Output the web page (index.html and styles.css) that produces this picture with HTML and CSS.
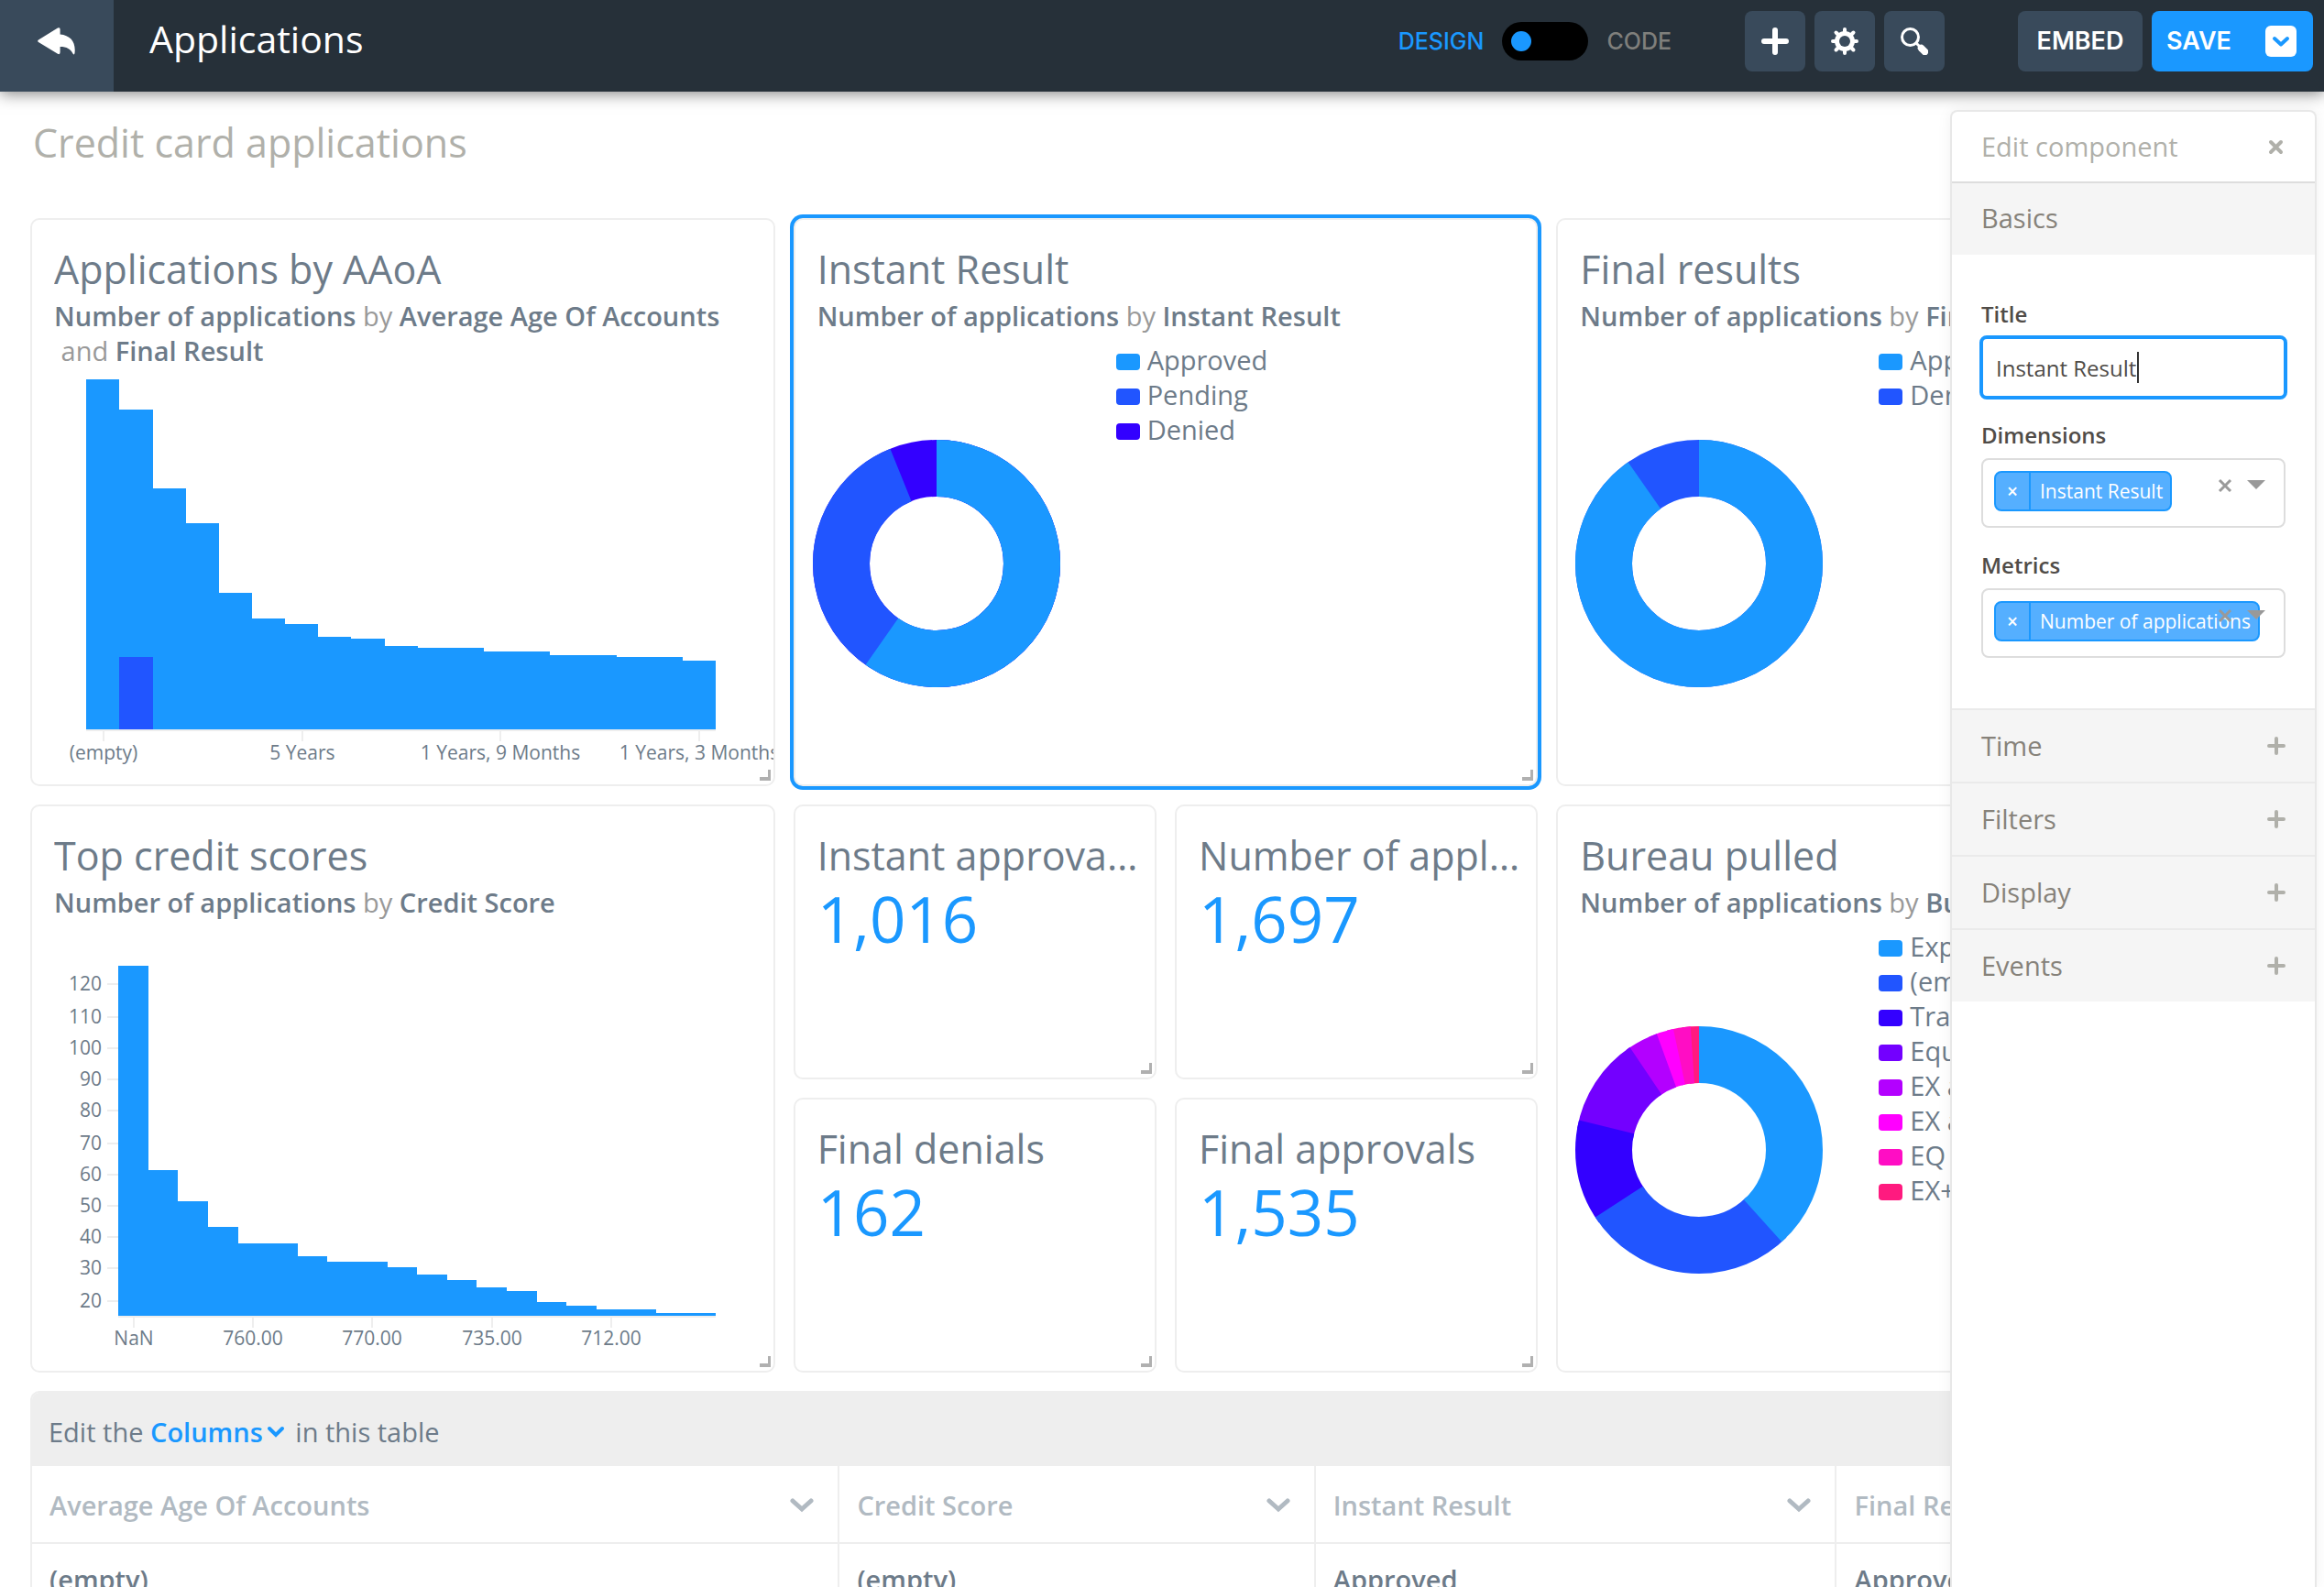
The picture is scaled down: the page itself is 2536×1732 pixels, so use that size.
FILE: index.html
```html
<!DOCTYPE html>
<html lang="en">
<head>
<meta charset="utf-8">
<title>Applications</title>
<link rel="stylesheet" href="styles.css">
</head>
<body>
<header class="topbar">
  <a class="back" href="#" aria-label="Back">
    <svg width="42" height="30" viewBox="0 0 42 30"><path fill="#fff" d="M1 13.5 22 .6Q24.600-.6 24.600 2V7.500C36 8.500 42 16 40.500 28Q40 30.500 38.500 28.500C36 23.500 32 21 24.600 21V27Q24.600 30 22 28.800L1 16Q-.6 14.700 1 13.500Z"/></svg>
  </a>
  <h1 class="app-title">Applications</h1>
  <label class="mode">
    <span class="mode-on">DESIGN</span>
    <input class="switch" type="checkbox" role="switch" aria-label="Code mode">
    <span class="mode-off">CODE</span>
  </label>
  <div class="tools">
    <button class="tool" type="button" aria-label="Add">
      <svg width="30" height="30" viewBox="0 0 30 30"><path d="M15 3V27M3 15H27" stroke="#fff" stroke-width="6" stroke-linecap="round"/></svg>
    </button>
    <button class="tool" type="button" aria-label="Settings">
      <svg width="30" height="30" viewBox="0 0 30 30"><g stroke="#fff" stroke-width="4" stroke-linecap="round"><path d="M15 2V28M2 15H28M5.500 5.500 24.500 24.500M24.500 5.500 5.500 24.500"/></g><circle cx="15" cy="15" r="11" fill="#fff"/><circle cx="15" cy="15" r="6" fill="#394a5b"/></svg>
    </button>
    <button class="tool" type="button" aria-label="Search">
      <svg width="30" height="30" viewBox="0 0 30 30"><circle cx="10.500" cy="10.500" r="9" fill="none" stroke="#fff" stroke-width="3"/><path d="M16.500 16.500 22 22" stroke="#fff" stroke-width="3"/><path d="M22.500 22.500 26.500 26.500" stroke="#fff" stroke-width="7.500" stroke-linecap="round"/></svg>
    </button>
  </div>
  <div class="actions">
    <button class="action" type="button">EMBED</button>
    <button class="action save" type="button">SAVE
      <svg width="34" height="34" viewBox="0 0 34 34"><rect width="34" height="34" rx="6" fill="#fff"/><path d="M10 14 17 20.500 24 14" fill="none" stroke="#1a98ff" stroke-width="4" stroke-linecap="round" stroke-linejoin="round"/></svg>
    </button>
  </div>
</header>

<main class="page">
  <h2 class="page-title">Credit card applications</h2>
  <div class="board">
    <section class="card large">
      <h3 class="card-title">Applications by AAoA</h3>
      <p class="query"><b>Number of applications</b> by <b>Average Age Of Accounts</b><br>&nbsp;and <b>Final Result</b></p>
      <svg class="bars" role="img" aria-label="Applications by average age of accounts">
        <path fill="#1a98ff" d="M59 395V13H95V46H132V132H168V170H204V246H240V274H276V280H312V294H348V296H385V304H421V306H493V310H565V314H638V316H710V320H746V395Z"/>
        <path fill="#2155ff" d="M95 316H132V395H95Z"/>
        <path class="axis" d="M59 396H746M78 396V408M295 396V408M511 396V408M728 396V408"/>
        <g class="tick middle"><text x="78" y="428">(empty)</text><text x="295" y="428">5 Years</text><text x="511" y="428">1 Years, 9 Months</text><text x="728" y="428">1 Years, 3 Months</text></g>
      </svg>
      <i class="grip"></i>
    </section>

    <section class="card large selected">
      <h3 class="card-title">Instant Result</h3>
      <p class="query"><b>Number of applications</b> by <b>Instant Result</b></p>
      <div class="donut-row">
        <svg class="donut" width="308" height="420" role="img" aria-label="Instant result share">
          <g class="ring" transform="rotate(-90 154 252)">
            <circle cx="154" cy="252" r="104" pathLength="360" stroke="#3300ff"/>
            <circle cx="154" cy="252" r="104" pathLength="360" stroke="#2155ff" stroke-dasharray="338 360"/>
            <circle cx="154" cy="252" r="104" pathLength="360" stroke="#1a98ff" stroke-dasharray="215 360"/>
          </g>
        </svg>
        <ul class="legend">
          <li><i class="c1"></i>Approved</li>
          <li><i class="c2"></i>Pending</li>
          <li><i class="c3"></i>Denied</li>
        </ul>
      </div>
      <i class="grip"></i>
    </section>

    <section class="card large">
      <h3 class="card-title">Final results</h3>
      <p class="query"><b>Number of applications</b> by <b>Final Result</b></p>
      <div class="donut-row">
        <svg class="donut" width="308" height="420" role="img" aria-label="Final results share">
          <g class="ring" transform="rotate(-90 154 252)">
            <circle cx="154" cy="252" r="104" pathLength="360" stroke="#2155ff"/>
            <circle cx="154" cy="252" r="104" pathLength="360" stroke="#1a98ff" stroke-dasharray="325 360"/>
          </g>
        </svg>
        <ul class="legend">
          <li><i class="c1"></i>Approved</li>
          <li><i class="c2"></i>Denied</li>
        </ul>
      </div>
      <i class="grip"></i>
    </section>

    <section class="card large">
      <h3 class="card-title">Top credit scores</h3>
      <p class="query"><b>Number of applications</b> by <b>Credit Score</b></p>
      <svg class="bars" role="img" aria-label="Applications by credit score">
        <path fill="#1a98ff" d="M94 433V51H127V274H159V308H192V336H225V354H290V368H322V374H388V380H420V388H453V394H485V402H518V406H551V418H583V422H616V426H681V430H746V433Z"/>
        <path class="axis" d="M94 434H746M111 434V446M241 434V446M371 434V446M502 434V446M632 434V446M82 71H94M82 107H94M82 141H94M82 175H94M82 209H94M82 245H94M82 279H94M82 313H94M82 347H94M82 381H94M82 417H94"/>
        <g class="tick end"><text x="76" y="78">120</text><text x="76" y="114">110</text><text x="76" y="148">100</text><text x="76" y="182">90</text><text x="76" y="216">80</text><text x="76" y="252">70</text><text x="76" y="286">60</text><text x="76" y="320">50</text><text x="76" y="354">40</text><text x="76" y="388">30</text><text x="76" y="424">20</text></g>
        <g class="tick middle"><text x="111" y="465">NaN</text><text x="241" y="465">760.00</text><text x="371" y="465">770.00</text><text x="502" y="465">735.00</text><text x="632" y="465">712.00</text></g>
      </svg>
      <i class="grip"></i>
    </section>

    <section class="card">
      <h3 class="card-title">Instant approvals count</h3>
      <p class="kpi">1,016</p>
      <i class="grip"></i>
    </section>
    <section class="card">
      <h3 class="card-title">Number of applications</h3>
      <p class="kpi">1,697</p>
      <i class="grip"></i>
    </section>

    <section class="card large">
      <h3 class="card-title">Bureau pulled</h3>
      <p class="query"><b>Number of applications</b> by <b>Bureau Pulled</b></p>
      <div class="donut-row">
        <svg class="donut" width="308" height="420" role="img" aria-label="Bureau pulled share">
          <g class="ring" transform="rotate(-90 154 252)">
            <circle cx="154" cy="252" r="104" pathLength="360" stroke="#ff1a7f" stroke-dasharray="8 352" stroke-dashoffset="-352"/>
            <circle cx="154" cy="252" r="104" pathLength="360" stroke="#ff0dc4" stroke-dasharray="11 349" stroke-dashoffset="-345"/>
            <circle cx="154" cy="252" r="104" pathLength="360" stroke="#ff00ff" stroke-dasharray="12 348" stroke-dashoffset="-336"/>
            <circle cx="154" cy="252" r="104" pathLength="360" stroke="#b300ff" stroke-dasharray="16 344" stroke-dashoffset="-324"/>
            <circle cx="154" cy="252" r="104" pathLength="360" stroke="#7300ff" stroke-dasharray="46 314" stroke-dashoffset="-280"/>
            <circle cx="154" cy="252" r="104" pathLength="360" stroke="#3300ff" stroke-dasharray="50 310" stroke-dashoffset="-234"/>
            <circle cx="154" cy="252" r="104" pathLength="360" stroke="#2155ff" stroke-dasharray="102 258" stroke-dashoffset="-135"/>
            <circle cx="154" cy="252" r="104" pathLength="360" stroke="#1a98ff" stroke-dasharray="138 222"/>
          </g>
        </svg>
        <ul class="legend">
          <li><i class="c1"></i>Experian</li>
          <li><i class="c2"></i>(empty)</li>
          <li><i class="c3"></i>TransUnion</li>
          <li><i class="c4"></i>Equifax</li>
          <li><i class="c5"></i>EX and TU</li>
          <li><i class="c6"></i>EX and EQ</li>
          <li><i class="c7"></i>EQ and TU</li>
          <li><i class="c8"></i>EX+EQ+TU</li>
        </ul>
      </div>
      <i class="grip"></i>
    </section>

    <section class="card">
      <h3 class="card-title">Final denials</h3>
      <p class="kpi">162</p>
      <i class="grip"></i>
    </section>
    <section class="card">
      <h3 class="card-title">Final approvals</h3>
      <p class="kpi">1,535</p>
      <i class="grip"></i>
    </section>

    <section class="table-card">
      <div class="table-bar">Edit the&nbsp;<button class="columns" type="button">Columns<svg width="20" height="14" viewBox="0 0 20 14"><path d="M3 3 10 10 17 3" fill="none" stroke="#1a98ff" stroke-width="4" stroke-linecap="round"/></svg></button>&nbsp;in this table</div>
      <table class="data">
        <thead>
          <tr>
            <th class="w-age"><span class="head">Average Age Of Accounts<svg width="26" height="18" viewBox="0 0 26 18"><path d="M3 4 13 13 23 4"/></svg></span></th>
            <th class="w-score"><span class="head">Credit Score<svg width="26" height="18" viewBox="0 0 26 18"><path d="M3 4 13 13 23 4"/></svg></span></th>
            <th class="w-instant"><span class="head">Instant Result<svg width="26" height="18" viewBox="0 0 26 18"><path d="M3 4 13 13 23 4"/></svg></span></th>
            <th><span class="head">Final Result<svg width="26" height="18" viewBox="0 0 26 18"><path d="M3 4 13 13 23 4"/></svg></span></th>
          </tr>
        </thead>
        <tbody>
          <tr><td>(empty)</td><td>(empty)</td><td>Approved</td><td>Approved</td></tr>
        </tbody>
      </table>
    </section>
  </div>
</main>

<aside class="panel">
  <div class="panel-head">
    <h2 class="panel-title">Edit component</h2>
    <button class="icon-button" type="button" aria-label="Close"><svg width="20" height="20" viewBox="0 0 20 20"><path d="M4 5 15 16M15 5 4 16" stroke="#b0b0aa" stroke-width="4" stroke-linecap="round"/></svg></button>
  </div>
  <h3 class="section first">Basics</h3>
  <form class="fields">
    <label class="label" for="title">Title</label>
    <div class="text-wrap"><input class="text" id="title" type="text" value="Instant Result"><i class="caret"></i></div>
    <span class="label" id="dimensions">Dimensions</span>
    <div class="multi" role="group" aria-labelledby="dimensions">
      <span class="chip"><button class="remove" type="button" aria-label="Remove">×</button><span class="chip-text">Instant Result</span></span>
      <span class="controls">
        <button class="icon-button" type="button" aria-label="Clear"><svg width="16" height="16" viewBox="0 0 16 16"><path d="M2 2 14 14M14 2 2 14" stroke="#999" stroke-width="3"/></svg></button>
        <button class="icon-button" type="button" aria-label="Open"><svg width="20" height="16" viewBox="0 0 20 16"><path d="M0 2H20L10 12Z" fill="#999"/></svg></button>
      </span>
    </div>
    <span class="label" id="metrics">Metrics</span>
    <div class="multi" role="group" aria-labelledby="metrics">
      <span class="chip"><button class="remove" type="button" aria-label="Remove">×</button><span class="chip-text">Number of applications</span></span>
      <span class="controls">
        <button class="icon-button" type="button" aria-label="Clear"><svg width="16" height="16" viewBox="0 0 16 16"><path d="M2 2 14 14M14 2 2 14" stroke="#999" stroke-width="3"/></svg></button>
        <button class="icon-button" type="button" aria-label="Open"><svg width="20" height="16" viewBox="0 0 20 16"><path d="M0 2H20L10 12Z" fill="#999"/></svg></button>
      </span>
    </div>
  </form>
  <button class="section" type="button">Time<svg width="20" height="20" viewBox="0 0 20 20"><path d="M10 2V18M2 10H18"/></svg></button>
  <button class="section" type="button">Filters<svg width="20" height="20" viewBox="0 0 20 20"><path d="M10 2V18M2 10H18"/></svg></button>
  <button class="section" type="button">Display<svg width="20" height="20" viewBox="0 0 20 20"><path d="M10 2V18M2 10H18"/></svg></button>
  <button class="section" type="button">Events<svg width="20" height="20" viewBox="0 0 20 20"><path d="M10 2V18M2 10H18"/></svg></button>
</aside>
</body>
</html>
```
FILE: styles.css
```css
* {
  box-sizing: border-box;
}

html {
  height: 100%;
}

body {
  position: relative;
  height: 100%;
  margin: 0;
  overflow: hidden;
  background: #fff;
  color: #6d7b89;
  font: 29px/38px "Open Sans", "Noto Sans", sans-serif;
}

h1, h2, h3, p, ul {
  margin: 0;
  padding: 0;
  font-weight: 400;
}

button {
  padding: 0;
  border: 0;
  background: none;
  color: inherit;
  font: inherit;
  cursor: pointer;
}

b {
  font-weight: 600;
}

svg {
  flex: none;
}

/* Top bar */
.topbar {
  position: relative;
  display: flex;
  align-items: center;
  height: 100px;
  padding: 0 12px 10px 0;
  background: #263039;
  box-shadow: 0 2px 16px rgba(0, 0, 0, 0.5);
}

.back {
  display: flex;
  align-items: center;
  justify-content: center;
  align-self: flex-start;
  width: 124px;
  height: 100px;
  padding-bottom: 10px;
  background: #394a5b;
}

.app-title {
  flex: 1;
  padding: 0 0 6px 39px;
  color: #fff;
  font-size: 41px;
  line-height: 56px;
}

.mode {
  display: flex;
  align-items: center;
  gap: 20px;
  font: 500 25px/30px Inter, sans-serif;
}

.mode-on {
  color: #1a98ff;
}

.mode-off {
  color: #7f7f7c;
}

.switch {
  display: flex;
  align-items: center;
  width: 94px;
  height: 42px;
  margin: 0;
  padding: 10px;
  border-radius: 21px;
  background: #000;
  appearance: none;
}

.switch::before {
  content: "";
  width: 22px;
  height: 22px;
  border-radius: 50%;
  background: #1a98ff;
}

.tools,
.actions {
  display: flex;
  gap: 10px;
  margin-left: 80px;
}

.tool,
.action {
  display: flex;
  align-items: center;
  justify-content: center;
  height: 66px;
  border-radius: 8px;
  background: #394a5b;
}

.tool {
  width: 66px;
}

.action {
  width: 136px;
  color: #fff;
  font: 600 27px/30px Inter, sans-serif;
}

.save {
  justify-content: space-between;
  width: 176px;
  padding: 0 18px 0 16px;
  background: #1a98ff;
}

/* Board */
.page {
  padding: 28px 25px 0 33px;
}

.page-title {
  padding: 0 3px;
  color: #b0b0aa;
  font-size: 43px;
  line-height: 56px;
}

.board {
  display: grid;
  grid-template-columns: repeat(6, minmax(0, 1fr));
  grid-auto-rows: minmax(300px, auto);
  gap: 20px;
  margin-top: 54px;
}

.card {
  position: relative;
  display: flex;
  flex-direction: column;
  padding-top: 22px;
  border: 2px solid #eee;
  border-radius: 10px;
  background: #fff;
}

.large {
  grid-column: span 2;
  grid-row: span 2;
}

.selected {
  box-shadow: 0 0 0 4px #1a98ff;
}

.card-title {
  margin: 0 12px 0 24px;
  overflow: hidden;
  font-size: 43px;
  line-height: 64px;
  text-overflow: ellipsis;
  white-space: nowrap;
}

.query {
  margin: 0 24px;
  color: #999;
  white-space: nowrap;
}

.query b {
  color: #6d7b89;
}

.kpi {
  margin: 0 24px;
  color: #1a98ff;
  font-size: 69px;
  line-height: 72px;
}

.grip {
  position: absolute;
  right: 3px;
  bottom: 4px;
  width: 12px;
  height: 12px;
  border: solid #b0b0b0;
  border-width: 0 3px 4px 0;
}

.bars {
  flex: 1;
  width: 100%;
  height: 0;
  margin-top: -1px;
}

.axis {
  fill: none;
  stroke: #eee;
  stroke-width: 2;
}

.tick {
  fill: #6d7b89;
  font-size: 21px;
}

.middle {
  text-anchor: middle;
}

.end {
  text-anchor: end;
}

.donut-row {
  display: flex;
  gap: 42px;
  margin-top: -1px;
}

.ring {
  fill: none;
  stroke-width: 62;
}

.legend {
  padding-top: 11px;
  list-style: none;
  white-space: nowrap;
}

.legend li {
  display: flex;
  align-items: center;
  gap: 8px;
}

.legend i {
  width: 26px;
  height: 18px;
  margin-top: 4px;
  border-radius: 4px;
}

.c1 { background: #1a98ff; }
.c2 { background: #2155ff; }
.c3 { background: #3300ff; }
.c4 { background: #7300ff; }
.c5 { background: #b300ff; }
.c6 { background: #ff00ff; }
.c7 { background: #ff0dc4; }
.c8 { background: #ff1a7f; }

/* Table */
.table-card {
  grid-column: 1 / -1;
  overflow: hidden;
  border: 2px solid #eee;
  border-radius: 10px;
}

.table-bar {
  display: flex;
  align-items: center;
  height: 80px;
  padding: 6px 18px 0;
  background: #eee;
}

.columns {
  display: flex;
  align-items: center;
  gap: 4px;
  margin-right: 4px;
  color: #1a98ff;
  font-weight: 600;
}

.data {
  width: 100%;
  border-collapse: collapse;
  table-layout: fixed;
  font-weight: 600;
}

.data th,
.data td {
  height: 84px;
  padding: 2px 19px 0;
  border-right: 2px solid #eee;
  border-bottom: 2px solid #eee;
  text-align: left;
}

.data td {
  padding-bottom: 6px;
}

.data th {
  padding-right: 26px;
  color: #b1bac2;
  font-weight: 600;
}

.w-age { width: 35.6%; }
.w-score { width: 21%; }
.w-instant { width: 23%; }

.head {
  display: flex;
  align-items: center;
  justify-content: space-between;
}

.head path {
  fill: none;
  stroke: #b1bac2;
  stroke-width: 5;
  stroke-linecap: round;
}

/* Edit panel */
.panel {
  position: absolute;
  top: 120px;
  right: 8px;
  bottom: 0;
  width: 400px;
  border: 2px solid #e8e8e8;
  border-bottom: 0;
  border-radius: 8px 8px 0 0;
  background: #fff;
  box-shadow: 0 0 16px rgba(0, 0, 0, 0.06);
}

.panel-head {
  display: flex;
  align-items: center;
  justify-content: space-between;
  height: 78px;
  padding: 0 32px;
  border-bottom: 2px solid #ddd;
}

.panel-title {
  color: #b0b0aa;
  font-size: 29px;
}

.icon-button {
  display: flex;
}

.section {
  display: flex;
  align-items: center;
  justify-content: space-between;
  width: 100%;
  height: 80px;
  padding: 0 32px;
  border-top: 2px solid #eaeaea;
  background: #f5f5f5;
  color: #86827a;
  font-size: 29px;
}

.first {
  height: 78px;
  padding-bottom: 3px;
  border-top: 0;
}

.section path {
  stroke: #b0b0aa;
  stroke-width: 4;
  stroke-linecap: round;
}

.fields {
  display: flex;
  flex-direction: column;
  padding: 47px 32px 32px;
}

.label {
  color: #504c48;
  font-size: 24px;
  font-weight: 600;
  line-height: 36px;
}

.text-wrap {
  position: relative;
  margin: 5px -2px 21px;
}

.text {
  display: block;
  width: 100%;
  height: 70px;
  padding: 0 14px;
  border: 4px solid #1a98ff;
  border-radius: 8px;
  outline: 0;
  color: #504c48;
  font: inherit;
  font-size: 24px;
}

.caret {
  position: absolute;
  top: 18px;
  left: 172px;
  width: 2px;
  height: 34px;
  background: #333;
}

.multi {
  position: relative;
  display: flex;
  align-items: flex-start;
  height: 76px;
  margin: 7px 0 23px;
  padding: 12px;
  border: 2px solid #ddd;
  border-radius: 8px;
}

.chip {
  display: flex;
  height: 44px;
  border: 2px solid #1a98ff;
  border-radius: 8px;
  background: #55afff;
  color: #fff;
  font-size: 21px;
  line-height: 40px;
  white-space: nowrap;
}

.remove {
  width: 38px;
  border-right: 2px solid #1a98ff;
  font-weight: 600;
}

.chip-text {
  padding: 0 8px 0 10px;
}

.controls {
  position: absolute;
  top: 20px;
  right: 20px;
  display: flex;
  gap: 16px;
}
```
